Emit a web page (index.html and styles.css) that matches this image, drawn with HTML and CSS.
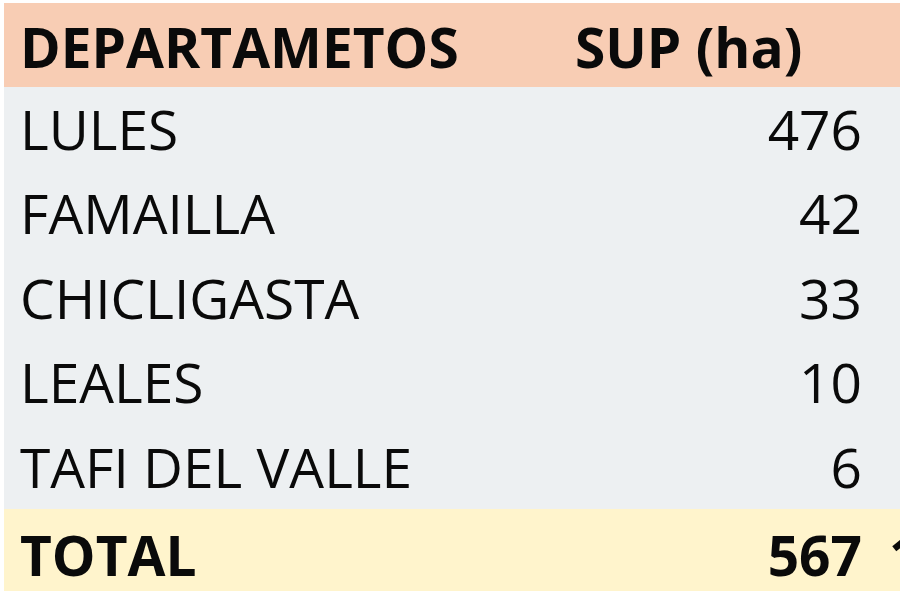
FILE: index.html
```html
<!DOCTYPE html>
<html lang="es">
<head>
<meta charset="utf-8">
<title>Departamentos</title>
<link rel="stylesheet" href="styles.css">
</head>
<body>
<div class="sheet">
  <div class="row head">
    <div class="c1">DEPARTAMETOS</div>
    <div class="c2">SUP (ha)</div>
    <div class="c3"></div>
  </div>
  <div class="row body">
    <div class="c1">LULES</div>
    <div class="c2 num">476</div>
    <div class="c3"></div>
  </div>
  <div class="row body">
    <div class="c1">FAMAILLA</div>
    <div class="c2 num">42</div>
    <div class="c3"></div>
  </div>
  <div class="row body">
    <div class="c1">CHICLIGASTA</div>
    <div class="c2 num">33</div>
    <div class="c3"></div>
  </div>
  <div class="row body">
    <div class="c1">LEALES</div>
    <div class="c2 num">10</div>
    <div class="c3"></div>
  </div>
  <div class="row body">
    <div class="c1">TAFI DEL VALLE</div>
    <div class="c2 num">6</div>
    <div class="c3"></div>
  </div>
  <div class="row total">
    <div class="c1">TOTAL</div>
    <div class="c2 num">567</div>
    <div class="c3">1</div>
  </div>
</div>
</body>
</html>
```
FILE: styles.css
```css
html, body {
  margin: 0;
  padding: 0;
  background: #ffffff;
}
body {
  width: 900px;
  height: 600px;
  overflow: hidden;
}
.sheet {
  padding: 3px 0 0 4px;
  font-family: "Open Sans", "Liberation Sans", sans-serif;
  font-size: 55px;
  font-weight: 500;
  color: #0a0a0a;
}
.row {
  display: grid;
  grid-template-columns: 556px 308px 1fr;
  height: 84px;
  line-height: 84px;
  white-space: nowrap;
  overflow: hidden;
}
.row.body {
  height: 84.4px;
  background: #edf0f2;
}
.head {
  background: #f8cdb4;
  font-weight: 700;
  padding-top: 3px;
  height: 81px;
  line-height: 81px;
}
.total {
  background: #fff4cc;
  font-weight: 700;
  height: 82px;
  line-height: 92px;
}
.c1 {
  padding-left: 16px;
}
.c2 {
  padding-left: 15px;
}
.c2.num {
  text-align: right;
  padding-left: 0;
  padding-right: 6px;
}
.c3 {
  padding-left: 21px;
  overflow: hidden;
}
```
